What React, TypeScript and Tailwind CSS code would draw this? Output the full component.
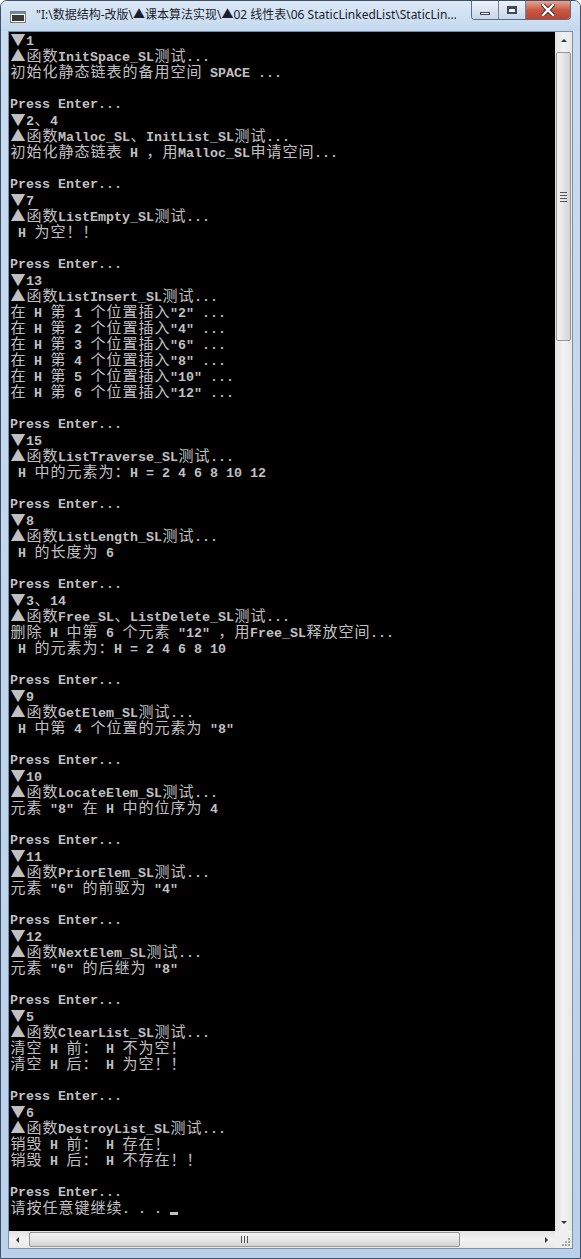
import React from "react";

const LINES: string[] = [
  "▼1",
  "▲函数InitSpace_SL测试...",
  "初始化静态链表的备用空间 SPACE ...",
  "",
  "Press Enter...",
  "▼2、4",
  "▲函数Malloc_SL、InitList_SL测试...",
  "初始化静态链表 H ，用Malloc_SL申请空间...",
  "",
  "Press Enter...",
  "▼7",
  "▲函数ListEmpty_SL测试...",
  " H 为空！！",
  "",
  "Press Enter...",
  "▼13",
  "▲函数ListInsert_SL测试...",
  "在 H 第 1 个位置插入\"2\" ...",
  "在 H 第 2 个位置插入\"4\" ...",
  "在 H 第 3 个位置插入\"6\" ...",
  "在 H 第 4 个位置插入\"8\" ...",
  "在 H 第 5 个位置插入\"10\" ...",
  "在 H 第 6 个位置插入\"12\" ...",
  "",
  "Press Enter...",
  "▼15",
  "▲函数ListTraverse_SL测试...",
  " H 中的元素为：H = 2 4 6 8 10 12",
  "",
  "Press Enter...",
  "▼8",
  "▲函数ListLength_SL测试...",
  " H 的长度为 6",
  "",
  "Press Enter...",
  "▼3、14",
  "▲函数Free_SL、ListDelete_SL测试...",
  "删除 H 中第 6 个元素 \"12\" ，用Free_SL释放空间...",
  " H 的元素为：H = 2 4 6 8 10",
  "",
  "Press Enter...",
  "▼9",
  "▲函数GetElem_SL测试...",
  " H 中第 4 个位置的元素为 \"8\"",
  "",
  "Press Enter...",
  "▼10",
  "▲函数LocateElem_SL测试...",
  "元素 \"8\" 在 H 中的位序为 4",
  "",
  "Press Enter...",
  "▼11",
  "▲函数PriorElem_SL测试...",
  "元素 \"6\" 的前驱为 \"4\"",
  "",
  "Press Enter...",
  "▼12",
  "▲函数NextElem_SL测试...",
  "元素 \"6\" 的后继为 \"8\"",
  "",
  "Press Enter...",
  "▼5",
  "▲函数ClearList_SL测试...",
  "清空 H 前： H 不为空！",
  "清空 H 后： H 为空！！",
  "",
  "Press Enter...",
  "▼6",
  "▲函数DestroyList_SL测试...",
  "销毁 H 前： H 存在！",
  "销毁 H 后： H 不存在！！",
  "",
  "Press Enter...",
  "请按任意键继续. . . ",
];

const isWide = (ch: string) => ch.charCodeAt(0) > 0x2000;

// splits a console line into 8px ascii runs and 16px double-width cells
function ConsoleLine({ text, cursor }: { text: string; cursor?: boolean }) {
  const parts: React.ReactNode[] = [];
  let buf = "";
  const flush = () => {
    if (!buf) return;
    parts.push(
      <span
        key={parts.length}
        className="font-['Liberation_Mono',monospace] text-[13.333px] font-bold"
      >
        {buf}
      </span>
    );
    buf = "";
  };
  for (const ch of text) {
    if (isWide(ch)) {
      flush();
      parts.push(
        <span
          key={parts.length}
          className="inline-block w-4 text-center font-['Noto_Sans_CJK_SC',sans-serif] text-[15px]"
        >
          {ch}
        </span>
      );
    } else {
      buf += ch;
    }
  }
  flush();
  return (
    <div className="h-4 overflow-visible whitespace-pre leading-[13px]">
      {parts}
      {cursor && <span className="inline-block h-[3px] w-2 bg-[#c0c0c0] align-[-2px]" />}
    </div>
  );
}

function Arrow({ dir }: { dir: "up" | "down" | "left" | "right" }) {
  const pts = {
    up: "1,5 4,2 7,5",
    down: "1,2 4,5 7,2",
    left: "5,1 2,4 5,7",
    right: "2,1 5,4 2,7",
  }[dir];
  return (
    <svg width="8" height="8" viewBox="0 0 8 8">
      <polygon points={pts} fill="#333" />
    </svg>
  );
}

function TitleBar() {
  return (
    <div className="flex h-[30px] items-start bg-gradient-to-b from-[#dce9f6] to-[#c3d8ee]">
      {/* console icon */}
      <div className="ml-[9px] mt-[10px] flex h-[12px] w-[16px] flex-col border border-[#7a7a7a] bg-white">
        <div className="h-[2px] bg-[#6c8cb4]" />
        <div className="m-[1px] flex-1 bg-[#3a3a3a]" />
      </div>
      <div className="ml-[10px] mt-[6px] w-[420px] overflow-hidden whitespace-nowrap font-['Noto_Sans','Noto_Sans_CJK_SC',sans-serif] text-[12px] leading-[16px] text-[#1c1c2c]">
        "I:\数据结构-改版\▲课本算法实现\▲02 线性表\06 StaticLinkedList\StaticLin...
      </div>
      <div className="ml-auto mr-[9px] flex h-[19px] overflow-hidden rounded-b-[4px] border border-t-0 border-[#5a6e8c]">
        <div className="flex w-[27px] items-end justify-center border-r border-[#6f82a0] bg-gradient-to-b from-[#eef3f9] to-[#c9d7e8] pb-[4px]">
          <div className="h-[3px] w-[10px] border border-[#3b4a60] bg-white" />
        </div>
        <div className="flex w-[27px] items-center justify-center border-r border-[#6f82a0] bg-gradient-to-b from-[#eef3f9] to-[#c9d7e8]">
          <div className="h-[8px] w-[10px] border-2 border-t-[3px] border-[#3b4a60] bg-white" />
        </div>
        <div className="flex w-[44px] items-center justify-center bg-gradient-to-b from-[#e8a493] via-[#c75a44] to-[#c0432c]">
          <svg width="14" height="12" viewBox="0 0 14 12">
            <path d="M2 1 L12 11 M12 1 L2 11" stroke="#3a2a2a" strokeWidth="4.2" strokeLinecap="square" />
            <path d="M2 1 L12 11 M12 1 L2 11" stroke="#fff" strokeWidth="2.4" strokeLinecap="square" />
          </svg>
        </div>
      </div>
    </div>
  );
}

function VScroll() {
  return (
    <div className="flex w-[17px] flex-col bg-gradient-to-r from-[#e3e3e3] via-[#f2f2f2] to-[#e8e8e8]">
      <div className="flex h-[17px] items-center justify-center">
        <Arrow dir="up" />
      </div>
      <div className="flex flex-1 flex-col pt-[3px]">
        <div className="mx-px flex h-[289px] flex-col items-center justify-center gap-[2px] rounded-[2px] border border-[#979797] bg-gradient-to-r from-[#f3f3f3] via-[#e6e6e6] to-[#d3d3d3]">
          <div className="h-px w-[7px] bg-[#555]" />
          <div className="h-px w-[7px] bg-[#555]" />
          <div className="h-px w-[7px] bg-[#555]" />
          <div className="h-px w-[7px] bg-[#555]" />
        </div>
      </div>
      <div className="flex h-[17px] items-center justify-center">
        <Arrow dir="down" />
      </div>
    </div>
  );
}

function HScroll() {
  return (
    <div className="flex h-[17px]">
      <div className="flex flex-1 bg-gradient-to-b from-[#e3e3e3] via-[#f2f2f2] to-[#e8e8e8]">
        <div className="flex w-[17px] items-center justify-center">
          <Arrow dir="left" />
        </div>
        <div className="flex flex-1 pl-[3px]">
          <div className="my-px flex w-[431px] items-center justify-center gap-[2px] rounded-[2px] border border-[#979797] bg-gradient-to-b from-[#f3f3f3] via-[#e6e6e6] to-[#d3d3d3]">
            <div className="h-[7px] w-px bg-[#555]" />
            <div className="h-[7px] w-px bg-[#555]" />
            <div className="h-[7px] w-px bg-[#555]" />
          </div>
        </div>
        <div className="flex w-[17px] items-center justify-center">
          <Arrow dir="right" />
        </div>
      </div>
      <div className="flex w-[17px] items-end justify-end bg-[#efefef] p-[2px]">
        <svg width="10" height="10" viewBox="0 0 10 10">
          {[
            [8, 2],
            [5, 5],
            [8, 5],
            [2, 8],
            [5, 8],
            [8, 8],
          ].map(([x, y]) => (
            <rect key={`${x}-${y}`} x={x} y={y} width="2" height="2" fill="#a8a8a8" />
          ))}
        </svg>
      </div>
    </div>
  );
}

export default function App() {
  return (
    <div className="h-[1259px] w-[581px] overflow-hidden rounded-t-[7px] border border-[#3f4f66] bg-gradient-to-b from-[#c9dcf0] to-[#b9d1ea]">
      <TitleBar />
      <div className="mx-[7px] border border-[#7c8ea8]">
        <div className="flex h-[1199px]">
          <div className="flex-1 overflow-hidden bg-black pl-px text-[#c0c0c0]">
            {LINES.map((l, i) => (
              <ConsoleLine key={i} text={l} cursor={i === LINES.length - 1} />
            ))}
          </div>
          <VScroll />
        </div>
        <HScroll />
      </div>
    </div>
  );
}
